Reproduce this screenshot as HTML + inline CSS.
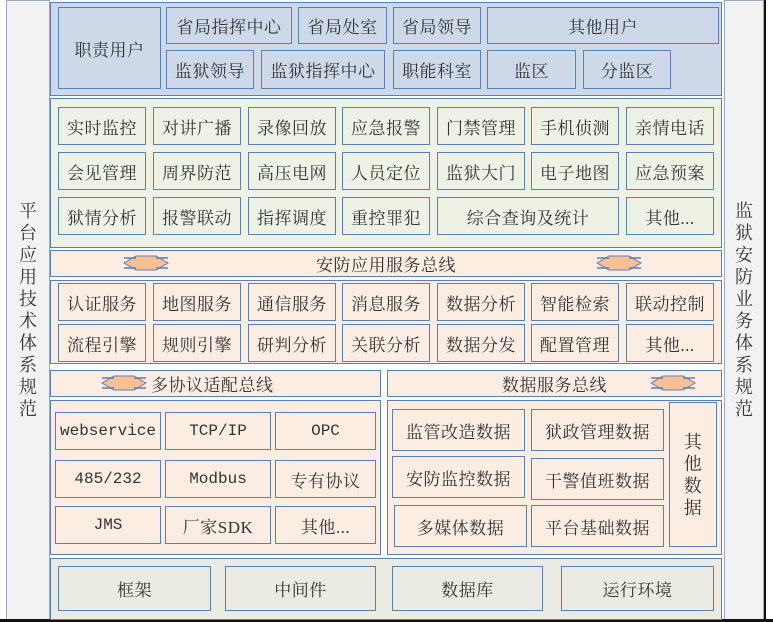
<!DOCTYPE html>
<html><head><meta charset="utf-8"><style>
*{margin:0;padding:0;box-sizing:border-box}
body{width:773px;height:622px;background:#fff;position:relative;overflow:hidden;font-family:"Liberation Serif","Noto Serif CJK SC",serif;color:#333}
div{position:absolute}
.s{border:1.5px solid #5b7fb0}
.b{border:1.5px solid #5b7fb0;display:flex;align-items:center;justify-content:center;font-size:17px;white-space:nowrap;letter-spacing:0.5px}
.u{background:#cdd9e9}
.g{background:#eef2e5}
.p{background:#fcede3}
.k{background:#ecebe3}
.v{font-size:18px;line-height:22px;width:20px;text-align:center;word-break:break-all;white-space:normal}
.m{font-family:"Liberation Mono",monospace;font-size:16px;letter-spacing:0}
</style></head><body>
<div style="left:6px;top:0;width:44px;height:620px;background:#f2f2f2;border:1px solid #9aa8c0"></div>
<div style="left:724px;top:0;width:40px;height:620px;background:#f2f2f2;border:1px solid #9aa8c0"></div>
<div style="left:764px;top:0;width:9px;height:622px;background:#fff;border-left:2px solid #111"></div>
<div style="left:0;top:619px;width:773px;height:3px;background:#111"></div>
<div class="v" style="left:18px;top:200px">平台应用技术体系规范</div>
<div class="v" style="left:734px;top:200px">监狱安防业务体系规范</div>

<div class="s u" style="left:50px;top:2px;width:672px;height:94px"></div>
<div class="b u" style="left:58px;top:7px;width:103px;height:82px">职责用户</div>
<div class="b u" style="left:166px;top:7px;width:126px;height:37px">省局指挥中心</div>
<div class="b u" style="left:298px;top:7px;width:89px;height:37px">省局处室</div>
<div class="b u" style="left:393px;top:7px;width:88px;height:37px">省局领导</div>
<div class="b u" style="left:487px;top:7px;width:232px;height:37px">其他用户</div>
<div class="b u" style="left:166px;top:50px;width:88px;height:39px">监狱领导</div>
<div class="b u" style="left:261px;top:50px;width:124px;height:39px">监狱指挥中心</div>
<div class="b u" style="left:393px;top:50px;width:88px;height:39px">职能科室</div>
<div class="b u" style="left:487px;top:50px;width:89px;height:39px">监区</div>
<div class="b u" style="left:583px;top:50px;width:88px;height:39px">分监区</div>

<div class="s g" style="left:50px;top:98px;width:672px;height:150px"></div>
<div class="b g" style="left:58px;top:107px;width:88px;height:38px">实时监控</div>
<div class="b g" style="left:153px;top:107px;width:88px;height:38px">对讲广播</div>
<div class="b g" style="left:248px;top:107px;width:88px;height:38px">录像回放</div>
<div class="b g" style="left:342px;top:107px;width:88px;height:38px">应急报警</div>
<div class="b g" style="left:437px;top:107px;width:88px;height:38px">门禁管理</div>
<div class="b g" style="left:531px;top:107px;width:88px;height:38px">手机侦测</div>
<div class="b g" style="left:626px;top:107px;width:88px;height:38px">亲情电话</div>
<div class="b g" style="left:58px;top:152px;width:88px;height:38px">会见管理</div>
<div class="b g" style="left:153px;top:152px;width:88px;height:38px">周界防范</div>
<div class="b g" style="left:248px;top:152px;width:88px;height:38px">高压电网</div>
<div class="b g" style="left:342px;top:152px;width:88px;height:38px">人员定位</div>
<div class="b g" style="left:437px;top:152px;width:88px;height:38px">监狱大门</div>
<div class="b g" style="left:531px;top:152px;width:88px;height:38px">电子地图</div>
<div class="b g" style="left:626px;top:152px;width:88px;height:38px">应急预案</div>
<div class="b g" style="left:58px;top:197px;width:88px;height:38px">狱情分析</div>
<div class="b g" style="left:153px;top:197px;width:88px;height:38px">报警联动</div>
<div class="b g" style="left:248px;top:197px;width:88px;height:38px">指挥调度</div>
<div class="b g" style="left:342px;top:197px;width:88px;height:38px">重控罪犯</div>
<div class="b g" style="left:437px;top:197px;width:182px;height:38px">综合查询及统计</div>
<div class="b g" style="left:626px;top:197px;width:88px;height:38px">其他...</div>

<div class="b p" style="left:50px;top:250px;width:672px;height:27px;font-size:17px">安防应用服务总线</div>
<svg style="position:absolute;left:122px;top:254px" width="48" height="18"><path d="M2 9 L14 2 L34 2 L46 9 L34 16 L14 16 Z" fill="#f9c096" stroke="#5b7fb0"/><path d="M2 4 H14 M2 14 H14 M34 4 H46 M34 14 H46" stroke="#5b7fb0" stroke-width="1.5"/></svg>
<svg style="position:absolute;left:595px;top:254px" width="48" height="18"><path d="M2 9 L14 2 L34 2 L46 9 L34 16 L14 16 Z" fill="#f9c096" stroke="#5b7fb0"/><path d="M2 4 H14 M2 14 H14 M34 4 H46 M34 14 H46" stroke="#5b7fb0" stroke-width="1.5"/></svg>

<div class="s p" style="left:50px;top:280px;width:672px;height:84px"></div>
<div class="b p" style="left:58px;top:283px;width:88px;height:38px">认证服务</div>
<div class="b p" style="left:153px;top:283px;width:88px;height:38px">地图服务</div>
<div class="b p" style="left:248px;top:283px;width:88px;height:38px">通信服务</div>
<div class="b p" style="left:342px;top:283px;width:88px;height:38px">消息服务</div>
<div class="b p" style="left:437px;top:283px;width:88px;height:38px">数据分析</div>
<div class="b p" style="left:531px;top:283px;width:88px;height:38px">智能检索</div>
<div class="b p" style="left:626px;top:283px;width:88px;height:38px">联动控制</div>
<div class="b p" style="left:58px;top:324px;width:88px;height:38px">流程引擎</div>
<div class="b p" style="left:153px;top:324px;width:88px;height:38px">规则引擎</div>
<div class="b p" style="left:248px;top:324px;width:88px;height:38px">研判分析</div>
<div class="b p" style="left:342px;top:324px;width:88px;height:38px">关联分析</div>
<div class="b p" style="left:437px;top:324px;width:88px;height:38px">数据分发</div>
<div class="b p" style="left:531px;top:324px;width:88px;height:38px">配置管理</div>
<div class="b p" style="left:626px;top:324px;width:88px;height:38px">其他...</div>

<div class="b p" style="left:50px;top:370px;width:331px;height:27px;font-size:17px;justify-content:flex-start;padding-left:100px">多协议适配总线</div>
<svg style="position:absolute;left:100px;top:374px" width="48" height="18"><path d="M2 9 L14 2 L34 2 L46 9 L34 16 L14 16 Z" fill="#f9c096" stroke="#5b7fb0"/><path d="M2 4 H14 M2 14 H14 M34 4 H46 M34 14 H46" stroke="#5b7fb0" stroke-width="1.5"/></svg>
<div class="b p" style="left:387px;top:370px;width:335px;height:27px;font-size:17px">数据服务总线</div>
<svg style="position:absolute;left:649px;top:374px" width="48" height="18"><path d="M2 9 L14 2 L34 2 L46 9 L34 16 L14 16 Z" fill="#f9c096" stroke="#5b7fb0"/><path d="M2 4 H14 M2 14 H14 M34 4 H46 M34 14 H46" stroke="#5b7fb0" stroke-width="1.5"/></svg>

<div class="s p" style="left:50px;top:400px;width:331px;height:155px"></div>
<div class="b p m" style="left:55px;top:412px;width:106px;height:38px">webservice</div>
<div class="b p m" style="left:165px;top:412px;width:106px;height:38px">TCP/IP</div>
<div class="b p m" style="left:275px;top:412px;width:101px;height:38px">OPC</div>
<div class="b p m" style="left:55px;top:460px;width:106px;height:38px">485/232</div>
<div class="b p m" style="left:165px;top:460px;width:106px;height:38px">Modbus</div>
<div class="b p" style="left:275px;top:460px;width:101px;height:38px">专有协议</div>
<div class="b p m" style="left:55px;top:506px;width:106px;height:38px">JMS</div>
<div class="b p" style="left:165px;top:506px;width:106px;height:38px">厂家SDK</div>
<div class="b p" style="left:275px;top:506px;width:101px;height:38px">其他...</div>

<div class="s p" style="left:387px;top:400px;width:335px;height:155px"></div>
<div class="b p" style="left:392px;top:409px;width:133px;height:42px">监管改造数据</div>
<div class="b p" style="left:531px;top:409px;width:133px;height:42px">狱政管理数据</div>
<div class="b p" style="left:392px;top:456px;width:133px;height:42px">安防监控数据</div>
<div class="b p" style="left:531px;top:458px;width:133px;height:42px">干警值班数据</div>
<div class="b p" style="left:394px;top:505px;width:133px;height:42px">多媒体数据</div>
<div class="b p" style="left:531px;top:505px;width:133px;height:42px">平台基础数据</div>
<div class="b p" style="left:669px;top:402px;width:48px;height:145px"><span class="v" style="position:static;display:block">其他数据</span></div>

<div class="s k" style="left:50px;top:558px;width:672px;height:62px"></div>
<div class="b k" style="left:58px;top:566px;width:153px;height:45px">框架</div>
<div class="b k" style="left:225px;top:566px;width:151px;height:45px">中间件</div>
<div class="b k" style="left:392px;top:566px;width:151px;height:45px">数据库</div>
<div class="b k" style="left:561px;top:566px;width:153px;height:45px">运行环境</div>
</body></html>
